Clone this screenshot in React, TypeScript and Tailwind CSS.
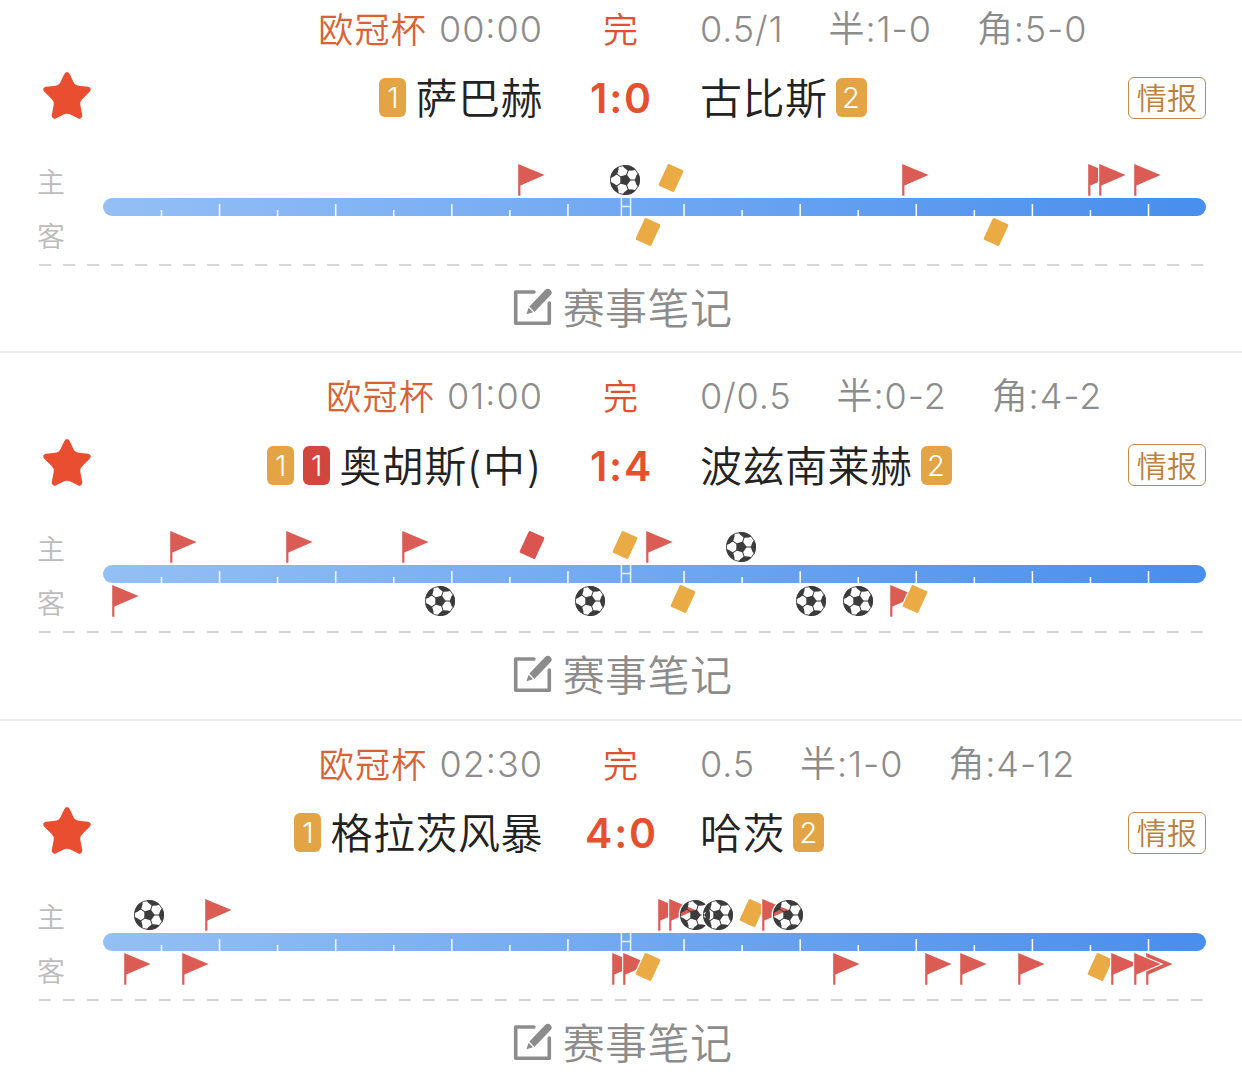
type EventKind = 'flag' | 'goal' | 'yellow' | 'red'

interface MatchEvent {
  kind: EventKind
  x: number
}

interface Match {
  league: string
  time: string
  status: string
  handicap: string
  half: string
  corner: string
  home: string
  homeNote?: string
  homeYellow?: number
  homeRed?: number
  away: string
  awayYellow?: number
  score: string
  homeEvents: MatchEvent[]
  awayEvents: MatchEvent[]
}

// x is the anchor on the timeline: pole for flags, centre for the rest
const flag = (x: number): MatchEvent => ({ kind: 'flag', x })
const goal = (x: number): MatchEvent => ({ kind: 'goal', x })
const yellow = (x: number): MatchEvent => ({ kind: 'yellow', x })
const red = (x: number): MatchEvent => ({ kind: 'red', x })

const matches: Match[] = [
  {
    league: '欧冠杯',
    time: '00:00',
    status: '完',
    handicap: '0.5/1',
    half: '半:1-0',
    corner: '角:5-0',
    home: '萨巴赫',
    homeYellow: 1,
    away: '古比斯',
    awayYellow: 2,
    score: '1:0',
    homeEvents: [flag(415), goal(522), yellow(568), flag(798.5), flag(984.5), flag(996), flag(1031)],
    awayEvents: [yellow(545), yellow(893)],
  },
  {
    league: '欧冠杯',
    time: '01:00',
    status: '完',
    handicap: '0/0.5',
    half: '半:0-2',
    corner: '角:4-2',
    home: '奥胡斯',
    homeNote: '(中)',
    homeYellow: 1,
    homeRed: 1,
    away: '波兹南莱赫',
    awayYellow: 2,
    score: '1:4',
    homeEvents: [flag(67), flag(183), flag(299), red(429), yellow(521.5), flag(543), goal(638)],
    awayEvents: [flag(9), goal(336.5), goal(487), yellow(580), goal(708), goal(754.5), flag(787), yellow(812)],
  },
  {
    league: '欧冠杯',
    time: '02:30',
    status: '完',
    handicap: '0.5',
    half: '半:1-0',
    corner: '角:4-12',
    home: '格拉茨风暴',
    homeYellow: 1,
    away: '哈茨',
    awayYellow: 2,
    score: '4:0',
    homeEvents: [goal(46), flag(102), flag(554.5), flag(566), goal(591.5), goal(615), yellow(649), flag(659), goal(685)],
    awayEvents: [
      flag(20.5),
      flag(79),
      flag(508.5),
      flag(520),
      yellow(545),
      flag(729.5),
      flag(822),
      flag(857),
      flag(915),
      yellow(997),
      flag(1008),
      flag(1043),
      flag(1031),
    ],
  },
]

const TICK_START = 58.5
const TICK_STEP = 58.06

function StarIcon() {
  return (
    <svg viewBox="0 0 50 50" className="size-[50px]">
      <path
        d="M25 3.3Q26 3.3 27 5.5L30 12Q32 16.5 36.5 17L46 18Q48.3 18.6 47 20.5L39.5 28Q36.3 31 37 35L39 45.5Q38.8 48 36.5 47.2L29.5 43.5Q25 41.5 20.5 43.5L13.5 47.2Q11.2 48 11 45.5L13 35Q13.7 31 10.5 28L3 20.5Q1.7 18.6 4 18L13.5 17Q18 16.5 20 12L23 5.5Q24 3.3 25 3.3Z"
        fill="#ea4e30"
        stroke="#ea4e30"
        strokeWidth="2.6"
        strokeLinejoin="round"
      />
    </svg>
  )
}

function NoteIcon() {
  return (
    <svg viewBox="0 0 40 40" className="size-10" fill="none">
      <path
        d="M21 4H2.7V35.3H36.3V15"
        stroke="#8c8c8c"
        strokeWidth="3.6"
        strokeLinecap="round"
        strokeLinejoin="round"
      />
      <path d="M17.5 18.5L32.7 2.6a2.6 2.6 0 0 1 4.2 4.1L21.4 22.8Z" fill="#8c8c8c" stroke="#8c8c8c" strokeWidth="1.6" />
      <path d="M15.6 19.8L20 24.2L13.4 26.2Z" fill="#8c8c8c" />
    </svg>
  )
}

function FlagIcon() {
  return (
    <svg viewBox="-2 -2 32 36" className="absolute -left-[2px] top-0 h-9 w-8">
      <path d="M0.2 0L26.6 11.1L2.4 21.6V31.8H0.2Z" fill="#db5c55" stroke="#fff" strokeWidth="2.2" paintOrder="stroke" />
    </svg>
  )
}

function CardIcon({ color }: { color: string }) {
  return (
    <svg viewBox="-17 -17 34 34" className="absolute -left-[17px] -top-[1px] size-[34px]">
      <rect
        x="-8.6"
        y="-12"
        width="17.2"
        height="24"
        rx="1.5"
        transform="rotate(24.5)"
        fill={color}
        stroke="#fff"
        strokeWidth="2.4"
        paintOrder="stroke"
      />
    </svg>
  )
}

function BallIcon() {
  return (
    <svg viewBox="-17 -17 34 34" className="absolute -left-[17px] top-[1px] size-[34px]">
      <circle r="15.6" fill="none" stroke="#fff" strokeWidth="1.6" />
      <circle r="14.6" fill="none" stroke="#3c3c3c" strokeWidth="0.9" />
      <path d="M5.8 0L1.8 5.5L-4.7 3.4L-4.7 -3.4L1.8 -5.5Z" fill="#3c3c3c" />
      {[0, 72, 144, 216, 288].map((angle) => (
        <g key={angle} transform={`rotate(${angle})`}>
          <path d="M4 0H11" stroke="#3c3c3c" strokeWidth="1" />
          <path d="M9.7 0L11.4 -4.6L13.2 -7A15 15 0 0 1 13.2 7L11.4 4.6Z" fill="#3c3c3c" />
        </g>
      ))}
    </svg>
  )
}

function EventIcon({ kind }: { kind: EventKind }) {
  if (kind === 'flag') return <FlagIcon />
  if (kind === 'goal') return <BallIcon />
  return <CardIcon color={kind === 'yellow' ? '#eaab45' : '#db5450'} />
}

function EventLane({ events }: { events: MatchEvent[] }) {
  return (
    <div className="relative h-9">
      {events.map((event) => (
        <div key={`${event.kind}-${event.x}`} className="absolute top-0" style={{ left: event.x }}>
          <EventIcon kind={event.kind} />
        </div>
      ))}
    </div>
  )
}

function TimelineBar() {
  return (
    <div className="relative z-10 h-[18px] overflow-hidden rounded-full bg-gradient-to-r from-[#94bff5] to-[#488eed]">
      <svg viewBox="0 0 1103 18" className="h-[18px] w-[1103px]" stroke="#fff" strokeWidth="1.5">
        {Array.from({ length: 18 }, (_, i) => {
          const x = TICK_START + i * TICK_STEP
          if (i === 8) {
            return <path key={i} d={`M${x - 4.6} 0V18M${x + 4.6} 0V18M${x - 4.6} 8.5H${x + 4.6}`} strokeOpacity="0.85" fill="none" />
          }
          return <path key={i} d={`M${x} ${i % 2 ? 6 : 12}V18`} />
        })}
      </svg>
    </div>
  )
}

function CardCount({ count, color }: { count: number; color: 'yellow' | 'red' }) {
  return (
    <span
      className={`flex h-[39px] items-center justify-center rounded-md text-[29px] leading-none text-white ${
        count === 1 ? 'w-[27px]' : 'w-[31px]'
      } ${color === 'yellow' ? 'bg-[#e3a445]' : 'bg-[#d2463f]'}`}
    >
      {count}
    </span>
  )
}

function MatchCard({ match }: { match: Match }) {
  return (
    <section className="h-[367.5px] border-b-2 border-[#ececec] pt-4">
      <div className="grid h-12 grid-cols-[543px_156px_1fr] items-center text-[35px] tracking-[1.2px] text-[#8c8c8c]">
        <div className="flex items-center justify-end gap-3 whitespace-nowrap">
          <span className="pt-0.5 text-[#d96234]">{match.league}</span>
          <span className="text-[36px] tracking-[1px] [font-feature-settings:'case']">{match.time}</span>
        </div>
        <span className="pt-0.5 text-center text-[#e2512f]">{match.status}</span>
        <div className="flex gap-[45px] whitespace-nowrap pl-px text-[36px] tracking-[0.9px]">
          <span>{match.handicap}</span>
          <span>{match.half}</span>
          <span>{match.corner}</span>
        </div>
      </div>

      <div className="mt-[15px] grid h-[66px] grid-cols-[100px_443px_156px_1fr_78px] items-center pr-9">
        <div className="-mt-1.5 pl-[42px]">
          <StarIcon />
        </div>
        <div className="flex items-center justify-end gap-[9px] whitespace-nowrap">
          {match.homeYellow && <CardCount count={match.homeYellow} color="yellow" />}
          {match.homeRed && <CardCount count={match.homeRed} color="red" />}
          <span className="pt-[3px] text-[42px] leading-none tracking-[0.5px] text-[#222]">
            {match.home}
            {match.homeNote && <span className="tracking-[1.7px]">{match.homeNote}</span>}
          </span>
        </div>
        <span className="pl-px pt-0.5 text-center text-[41px] font-semibold leading-none tracking-[1.8px] text-[#e5502f]">
          {match.score}
        </span>
        <div className="flex items-center gap-2 whitespace-nowrap pl-px">
          <span className="pt-[3px] text-[42px] leading-none tracking-[0.5px] text-[#222]">{match.away}</span>
          {match.awayYellow && <CardCount count={match.awayYellow} color="yellow" />}
        </div>
        <span className="flex h-[42px] items-center justify-center rounded-md border-[1.5px] border-[#c28a4a] pt-px text-[30px] leading-none tracking-[0.3px] text-[#bb803f]">
          情报
        </span>
      </div>

      <div className="mx-9 mt-[31px] flex h-[90px]">
        <div className="flex w-[67px] flex-col gap-[26px] pl-px pt-[7px] text-[28px] leading-7 text-[#bcbcbc]">
          <span>主</span>
          <span>客</span>
        </div>
        <div className="w-[1103px]">
          <EventLane events={match.homeEvents} />
          <TimelineBar />
          <EventLane events={match.awayEvents} />
        </div>
      </div>

      <svg viewBox="0 0 1166 2" className="ml-[39px] mt-3 block h-0.5 w-[1166px]">
        <path d="M0 1H1166" stroke="#c9c9c9" strokeWidth="1.5" strokeDasharray="12 12" />
      </svg>

      <div className="flex h-[84px] items-center justify-center gap-2.5 pl-[3px] text-[42px] tracking-[0.4px] text-[#8c8c8c]">
        <NoteIcon />
        <span className="pt-0.5 leading-none">赛事笔记</span>
      </div>
    </section>
  )
}

export default function App() {
  return (
    <main className="h-[1075px] w-[1242px] overflow-hidden bg-white font-['Inter','Noto_Sans_CJK_SC',sans-serif] font-[350]">
      <div className="-mt-[14.5px]">
        {matches.map((match) => (
          <MatchCard key={match.time} match={match} />
        ))}
      </div>
    </main>
  )
}
